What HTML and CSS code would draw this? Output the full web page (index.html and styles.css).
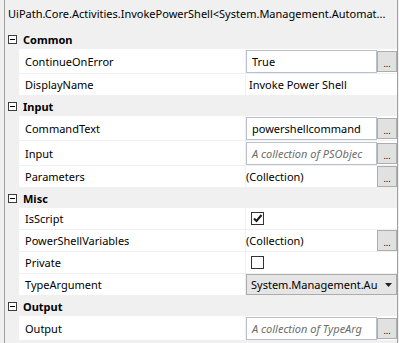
FILE: index.html
```html
<!DOCTYPE html>
<html lang="en">
<head>
    <meta charset="UTF-8">
    <title>Properties</title>
    <link rel="stylesheet" href="styles.css">
</head>
<body>
    <div class="panel">
        <div class="panel-title">UiPath.Core.Activities.InvokePowerShell&lt;System.Management.Automat...</div>

        <div class="cat-head"><span class="toggle"></span>Common</div>
        <div class="prop tall">
            <div class="prop-name">ContinueOnError</div>
            <div class="prop-value">
                <div class="textbox">True</div>
                <div class="more">...</div>
            </div>
        </div>
        <div class="prop">
            <div class="prop-name">DisplayName</div>
            <div class="prop-value"><span class="value-text">Invoke Power Shell</span></div>
        </div>

        <div class="cat-head"><span class="toggle"></span>Input</div>
        <div class="prop tall">
            <div class="prop-name">CommandText</div>
            <div class="prop-value">
                <div class="textbox">powershellcommand</div>
                <div class="more">...</div>
            </div>
        </div>
        <div class="prop tall">
            <div class="prop-name">Input</div>
            <div class="prop-value">
                <div class="textbox hint">A collection of PSObjec</div>
                <div class="more">...</div>
            </div>
        </div>
        <div class="prop">
            <div class="prop-name">Parameters</div>
            <div class="prop-value">
                <span class="collection">(Collection)</span>
                <div class="more">...</div>
            </div>
        </div>

        <div class="cat-head"><span class="toggle"></span>Misc</div>
        <div class="prop">
            <div class="prop-name">IsScript</div>
            <div class="prop-value">
                <span class="check">
                    <svg width="11" height="11" viewBox="0 0 11 11"><path d="M2 5.5 L4.5 8 L9.5 2" fill="none" stroke="#1a1a1a" stroke-width="2"/></svg>
                </span>
            </div>
        </div>
        <div class="prop">
            <div class="prop-name">PowerShellVariables</div>
            <div class="prop-value">
                <span class="collection">(Collection)</span>
                <div class="more">...</div>
            </div>
        </div>
        <div class="prop">
            <div class="prop-name">Private</div>
            <div class="prop-value"><span class="check"></span></div>
        </div>
        <div class="prop">
            <div class="prop-name">TypeArgument</div>
            <div class="prop-value">
                <div class="combo">
                    <span class="combo-text">System.Management.Au</span>
                    <svg width="7" height="4" viewBox="0 0 7 4"><path d="M0 0 H7 L3.5 4 Z" fill="#222"/></svg>
                </div>
            </div>
        </div>

        <div class="cat-head"><span class="toggle"></span>Output</div>
        <div class="prop tall">
            <div class="prop-name">Output</div>
            <div class="prop-value">
                <div class="textbox hint">A collection of TypeArg</div>
                <div class="more">...</div>
            </div>
        </div>
    </div>
</body>
</html>
```
FILE: styles.css
```css
html, body {
    margin: 0;
}
body {
    background: #f0f0f0;
    font-family: "Noto Sans", "Open Sans", sans-serif;
    font-size: 11px;
    color: #000;
}
.panel {
    margin-left: 4px;
    width: 394px;
    height: 343px;
    box-sizing: border-box;
    border-left: 1px solid #a0a0a0;
    border-right: 1px solid #a0a0a0;
    overflow: hidden;
}
.panel-title {
    height: 29px;
    line-height: 28px;
    padding-left: 3px;
    white-space: nowrap;
}
.cat-head {
    height: 20px;
    display: flex;
    align-items: center;
    font-weight: 700;
}
.toggle {
    position: relative;
    width: 9px;
    height: 9px;
    box-sizing: border-box;
    border: 1px solid #3c3c3c;
    background: #fff;
    margin: 0 6px 0 3px;
}
.toggle::after {
    content: '';
    position: absolute;
    left: 1px;
    top: 3px;
    width: 5px;
    height: 1px;
    background: #000;
}
.prop {
    height: 21px;
    margin: 0 0 1px 14px;
    display: grid;
    grid-template-columns: 226px 1fr;
    column-gap: 1px;
    background: #f0f0f0;
}
.prop.tall {
    height: 24px;
}
.prop-name {
    background: #fff;
    padding-left: 6px;
    display: flex;
    align-items: center;
    white-space: nowrap;
}
.prop-value {
    background: #fff;
    display: flex;
    align-items: center;
    white-space: nowrap;
    overflow: hidden;
}
.textbox {
    width: 131px;
    height: 23px;
    margin-top: 1px;
    box-sizing: border-box;
    border: 1px solid #b9c0cd;
    padding-left: 5px;
    line-height: 21px;
    overflow: hidden;
    align-self: flex-start;
}
.textbox.hint {
    font-style: italic;
    color: #6d6d6d;
}
.more {
    width: 20px;
    height: 21px;
    box-sizing: border-box;
    margin-left: auto;
    border: 1px solid #adadad;
    background: #e1e1e1;
    font-size: 9px;
    line-height: 9px;
    text-align: center;
    display: flex;
    align-items: flex-end;
    justify-content: center;
    padding-bottom: 3px;
}
.value-text {
    padding-left: 3px;
}
.collection {
    padding-left: 0;
}
.check {
    width: 13px;
    height: 13px;
    box-sizing: border-box;
    margin-left: 5px;
    border: 1px solid #333;
    background: #fff;
    display: flex;
    align-items: center;
    justify-content: center;
}
.combo {
    flex: 1;
    height: 21px;
    box-sizing: border-box;
    border: 1px solid #acacac;
    background: #e5e5e5;
    display: flex;
    align-items: center;
    padding: 0 4px 0 4px;
}
.combo-text {
    flex: 1;
    overflow: hidden;
}
```
